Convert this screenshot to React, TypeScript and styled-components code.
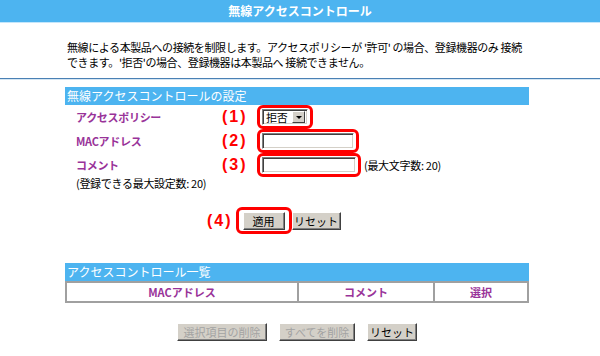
import React from 'react'
import styled, { createGlobalStyle } from 'styled-components'

const GlobalStyle = createGlobalStyle`
  body {
    margin: 0;
    background: #fff;
    color: #000;
    font-family: "Noto Sans CJK JP", "Noto Sans", sans-serif;
    font-size: 11px;
  }
`

const TitleBar = styled.div`
  height: 22px;
  line-height: 22px;
  background: #4db4f0;
  border-bottom: 1px solid #c4e6fb;
  color: #fff;
  font-size: 12px;
  font-weight: bold;
  text-align: center;
`

const Intro = styled.p`
  margin: 0;
  padding: 17px 0 0 67px;
  font-size: 11px;
  line-height: 15px;
  letter-spacing: -0.4px;
`

const Divider = styled.div`
  margin-top: 8px;
  border-top: 1px solid #4a80b4;
  border-bottom: 1px solid #d5e6f3;
`

const Content = styled.div`
  margin: 7px 0 0 65px;
  width: 464px;
`

const SectionBar = styled.div<{ $top?: number }>`
  margin-top: ${(p) => p.$top || 0}px;
  height: 18px;
  line-height: 18px;
  background: #4db4f0;
  color: #fff;
  font-size: 12px;
  padding-left: 2px;
`

const FormGrid = styled.div`
  display: grid;
  grid-template-columns: 146px 35px 1fr;
  grid-template-rows: 24px 24px 24px 12px;
  align-items: center;
  padding-left: 11px;
`

const Label = styled.div`
  color: #993399;
  font-weight: bold;
  letter-spacing: -0.3px;
`

const Num = styled.span`
  color: #f00;
  font-family: "Liberation Sans", sans-serif;
  font-weight: bold;
  font-size: 16px;
  letter-spacing: 2px;
`

const Highlight = styled.span<{ $pad?: string }>`
  display: inline-flex;
  align-items: center;
  border: 3px solid #f00;
  border-radius: 6px;
  padding: ${(p) => p.$pad || '1px 2px'};
`

const Control = styled.div`
  display: flex;
  align-items: center;
`

const Sunken = `
  box-sizing: border-box;
  height: 16px;
  background: #fff;
  border: 1px solid;
  border-color: #808080 #fff #fff #808080;
  box-shadow: inset 1px 1px #404040, inset -1px -1px #d4d0c8;
`

const SelectBox = styled.span`
  ${Sunken}
  display: inline-flex;
  align-items: center;
  justify-content: space-between;
  width: 46px;
  padding: 0 2px 0 3px;
  letter-spacing: -0.3px;
`

const ArrowBtn = styled.span`
  box-sizing: border-box;
  width: 13px;
  height: 12px;
  background: #d4d0c8;
  border: 1px solid;
  border-color: #fff #404040 #404040 #fff;
  display: inline-flex;
  align-items: center;
  justify-content: center;
  &::after {
    content: '';
    border-left: 3px solid transparent;
    border-right: 3px solid transparent;
    border-top: 3px solid #000;
  }
`

const TextInput = styled.input`
  ${Sunken}
  width: ${(p) => p.width || 92}px;
  padding: 0 2px;
  outline: none;
`

const Note = styled.span`
  margin-left: 3px;
  letter-spacing: -0.3px;
`

const Limit = styled.div`
  grid-column: 1 / -1;
  line-height: 12px;
  letter-spacing: -0.3px;
`

const ButtonRow = styled.div`
  display: flex;
  align-items: center;
  margin-top: 18px;
  padding-left: 142px;
  ${Num} {
    margin-right: 3px;
  }
`

const Button = styled.button<{ $w: number; $off?: boolean }>`
  box-sizing: border-box;
  width: ${(p) => p.$w}px;
  height: 18px;
  padding: 0;
  background: #d4d0c8;
  border: 1px solid;
  border-color: #fff #404040 #404040 #fff;
  box-shadow: inset -1px -1px #808080;
  font-family: inherit;
  font-size: 11px;
  line-height: 14px;
  color: ${(p) => (p.$off ? '#a3a3a3' : '#000')};
`

const ListTable = styled.table`
  width: 464px;
  border-collapse: collapse;
  th {
    height: 18px;
    padding: 0;
    border: 2px solid #a0a0a0;
    color: #993399;
    font-weight: bold;
    font-size: 11px;
    background: #fff;
  }
`

const BottomRow = styled.div`
  display: flex;
  justify-content: center;
  gap: 12px;
  margin-top: 20px;
`

export default function App() {
  return (
    <>
      <GlobalStyle />
      <TitleBar>無線アクセスコントロール</TitleBar>
      <Intro>
        無線による本製品への接続を制限します。アクセスポリシーが '許可' の場合、登録機器のみ 接続
        <br />
        できます。'拒否'の場合、登録機器は本製品へ 接続できません。
      </Intro>
      <Divider />
      <Content>
        <SectionBar>無線アクセスコントロールの設定</SectionBar>
        <FormGrid>
          <Label>アクセスポリシー</Label>
          <Num>(1)</Num>
          <Control>
            <Highlight>
              <SelectBox>
                拒否
                <ArrowBtn />
              </SelectBox>
            </Highlight>
          </Control>

          <Label>MACアドレス</Label>
          <Num>(2)</Num>
          <Control>
            <Highlight>
              <TextInput />
            </Highlight>
          </Control>

          <Label>コメント</Label>
          <Num>(3)</Num>
          <Control>
            <Highlight>
              <TextInput width={94} />
            </Highlight>
            <Note>(最大文字数: 20)</Note>
          </Control>

          <Limit>(登録できる最大設定数: 20)</Limit>
        </FormGrid>
        <ButtonRow>
          <Num>(4)</Num>
          <Highlight $pad="2px 4px 1px">
            <Button $w={42}>適用</Button>
          </Highlight>
          <Button $w={49}>リセット</Button>
        </ButtonRow>

        <SectionBar $top={29}>アクセスコントロール一覧</SectionBar>
        <ListTable>
          <thead>
            <tr>
              <th style={{ width: 230 }}>MACアドレス</th>
              <th style={{ width: 134 }}>コメント</th>
              <th>選択</th>
            </tr>
          </thead>
        </ListTable>
        <BottomRow>
          <Button $w={90} $off>選択項目の削除</Button>
          <Button $w={76} $off>すべてを削除</Button>
          <Button $w={50}>リセット</Button>
        </BottomRow>
      </Content>
    </>
  )
}
